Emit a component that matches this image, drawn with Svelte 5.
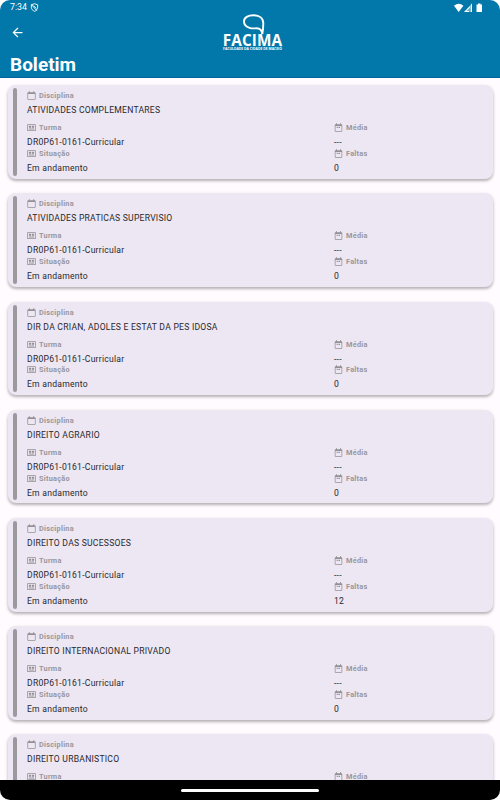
<script lang="ts">
	interface Subject {
		name: string;
		group: string;
		status: string;
		average: string;
		absences: number;
	}

	const names: string[] = [
		'ATIVIDADES COMPLEMENTARES',
		'ATIVIDADES PRATICAS SUPERVISIO',
		'DIR DA CRIAN, ADOLES E ESTAT DA PES IDOSA',
		'DIREITO AGRARIO',
		'DIREITO DAS SUCESSOES',
		'DIREITO INTERNACIONAL PRIVADO',
		'DIREITO URBANISTICO'
	];

	const subjects: Subject[] = names.map((name) => ({
		name,
		group: 'DR0P61-0161-Curricular',
		status: 'Em andamento',
		average: '---',
		absences: name === 'DIREITO DAS SUCESSOES' ? 12 : 0
	}));
</script>

{#snippet label(icon: string, text: string)}
	<div class="label">
		<svg viewBox="0 0 24 24">
			{#if icon === 'calendar'}
				<path
					d="M21 3h-2V0h-2v3H7V0H5v3H3C1.900 3 1 3.900 1 5v16c0 1.100.9 2 2 2h18c1.100 0 2-.9 2-2V5c0-1.100-.9-2-2-2zm0 18H3V8h18v13z"
				/>
			{:else if icon === 'event'}
				<path
					d="M20 3h-2V0h-2v3H8V0H6v3H4c-1.100 0-2 .9-2 2v16c0 1.100.9 2 2 2h16c1.100 0 2-.9 2-2V5c0-1.100-.9-2-2-2zm0 18H4V8h16v13zM7 10h3v3H7zm5 0h4v3h-4z"
				/>
			{:else}
				<path
					d="M22 3H2C.9 3 0 3.900 0 5v14c0 1.100.9 2 2 2h20c1.100 0 2-.9 2-2V5c0-1.100-.9-2-2-2zm0 16H2V5h20v14zM5 7h6v4H5zm8 0h6v4h-6zM5 12h6v2H5zm8 0h6v2h-6zM5 15h14v2H5z"
				/>
			{/if}
		</svg>
		<span>{text}</span>
	</div>
{/snippet}

<div class="screen">
	<header>
		<div class="status-bar">
			<span class="time">7:34</span>
			<svg class="shield" viewBox="0 0 10 10">
				<path d="M5 .8 8.500 2v2.700c0 2-1.400 3.800-3.500 4.500C2.900 8.500 1.500 6.700 1.500 4.700V2z" />
				<path d="M1.500 1.500l6 7M4 3l3 3" />
			</svg>
			<svg class="signals" viewBox="0 0 30 10">
				<path d="M0 2.700Q4.700-1.200 9.400 2.700L4.700 9z" />
				<path d="M18 .5V9H10z" fill-opacity=".4" />
				<path d="M10 9l6-6v1.500L12.500 8H15v1zM16.800 1.700L18 .5V9h-1.200z" />
				<path d="M24 .5h2.500v1H28V9h-5.500V1.500H24z" />
			</svg>
		</div>
		<div class="toolbar">
			<button aria-label="Voltar">
				<svg viewBox="0 0 24 24">
					<path d="M20 11H7.830l5.590-5.590L12 4l-8 8 8 8 1.410-1.410L7.830 13H20v-2z" />
				</svg>
			</button>
			<div class="logo">
				<svg viewBox="0 0 24 22">
					<path
						d="M20.300 20C20 16 18 14.300 14.500 14.300 12 14.300 10 14.800 7.500 13.800 4 12.700 2 10.700 2 7.500 2 3.500 6 1.300 11.500 1.300c6 0 9.800 3 9.800 8 0 4-.2 7-1 10.700z"
					/>
				</svg>
				<span class="brand">FACIMA</span>
				<span class="tagline">FACULDADE DA CIDADE DE MACEIÓ</span>
			</div>
		</div>
		<h1>Boletim</h1>
	</header>

	<main>
		{#each subjects as subject}
			<article>
				<div class="bar"></div>
				<div class="content">
					<div class="subject">
						{@render label('calendar', 'Disciplina')}
						<p>{subject.name}</p>
					</div>
					<div class="details">
						<div>
							{@render label('list', 'Turma')}
							<p>{subject.group}</p>
							{@render label('list', 'Situação')}
							<p>{subject.status}</p>
						</div>
						<div>
							{@render label('event', 'Média')}
							<p>{subject.average}</p>
							{@render label('event', 'Faltas')}
							<p>{subject.absences}</p>
						</div>
					</div>
				</div>
			</article>
		{/each}
	</main>

	<footer><div class="handle"></div></footer>
</div>

<style>
	:global(body) {
		background: #fff;
	}

	.screen {
		display: flex;
		flex-direction: column;
		width: 500px;
		height: 800px;
		box-sizing: border-box;
		overflow: hidden;
		border-radius: 10px;
		background: #fffbff;
		font-family: Roboto, sans-serif;
	}

	header {
		flex: none;
		height: 78px;
		box-sizing: border-box;
		border-bottom: 1px solid #00659a;
		background: #0278aa;
		color: #fff;
	}

	.status-bar {
		display: flex;
		align-items: center;
		height: 15px;
		padding: 0 16px 0 10px;
	}

	.time {
		width: 20px;
		font-size: 8.8px;
		line-height: 15px;
	}

	.shield {
		width: 9px;
		height: 9px;
		fill: none;
		stroke: #fff;
		stroke-width: 1;
	}

	.signals {
		width: 30px;
		height: 10px;
		margin-left: auto;
		fill: #fff;
	}

	.toolbar {
		display: grid;
		grid-template-columns: 1fr auto 1fr;
		height: 36px;
	}

	button {
		width: 15px;
		height: 15px;
		margin: 10px 0 0 10px;
		padding: 0;
		border: 0;
		background: none;
	}

	button svg {
		display: block;
		fill: #fff;
	}

	.logo {
		display: flex;
		flex-direction: column;
		align-items: center;
		width: 60px;
		margin-left: 5px;
	}

	.logo svg {
		flex: none;
		width: 24px;
		height: 22px;
		margin: -1px 0 0 3px;
		fill: none;
		stroke: #fff;
		stroke-width: 1.9;
	}

	.brand {
		margin-top: -3px;
		font: bold 15.3px/14px 'Open Sans', sans-serif;
		letter-spacing: 0.1px;
	}

	.tagline {
		margin-top: -0.5px;
		font: bold 3.4px/4px 'Open Sans', sans-serif;
		white-space: nowrap;
	}

	h1 {
		margin: 3px 0 0 10px;
		font-size: 19px;
		font-weight: 700;
		line-height: 22px;
	}

	main {
		display: flex;
		flex: 1;
		flex-direction: column;
		gap: 14.700px;
		min-height: 0;
		padding: 7.300px 7px 0 8px;
		overflow: hidden;
	}

	article {
		display: flex;
		flex: none;
		height: 93.500px;
		box-sizing: border-box;
		padding: 3px 4.500px;
		border-radius: 8px;
		background: #ede7f3;
		box-shadow:
			0 2px 3px rgba(0, 0, 0, 0.25),
			0 1px 4px rgba(0, 0, 0, 0.08);
	}

	.bar {
		width: 4.500px;
		border-radius: 2px;
		background: #9b999d;
	}

	.content {
		flex: 1;
		padding: 1.900px 0 0 10px;
	}

	.subject {
		height: 32px;
	}

	.details {
		display: grid;
		grid-template-columns: 307px 1fr;
	}

	.label {
		display: flex;
		align-items: center;
		gap: 3px;
		height: 12px;
		color: #98969b;
		font-size: 7.300px;
		font-weight: 700;
		letter-spacing: 0.280px;
		line-height: 12px;
	}

	.label svg {
		width: 9px;
		height: 9px;
		margin-top: -0.800px;
		fill: #929094;
	}

	p {
		height: 13.800px;
		margin: 0;
		padding-top: 1px;
		box-sizing: border-box;
		color: #29272c;
		font-size: 8.600px;
		letter-spacing: 0.240px;
		line-height: 14px;
		white-space: nowrap;
	}

	footer {
		display: flex;
		flex: none;
		align-items: center;
		justify-content: center;
		height: 20px;
		background: #000;
	}

	.handle {
		width: 138px;
		height: 3px;
		border-radius: 2px;
		background: #fff;
	}
</style>
